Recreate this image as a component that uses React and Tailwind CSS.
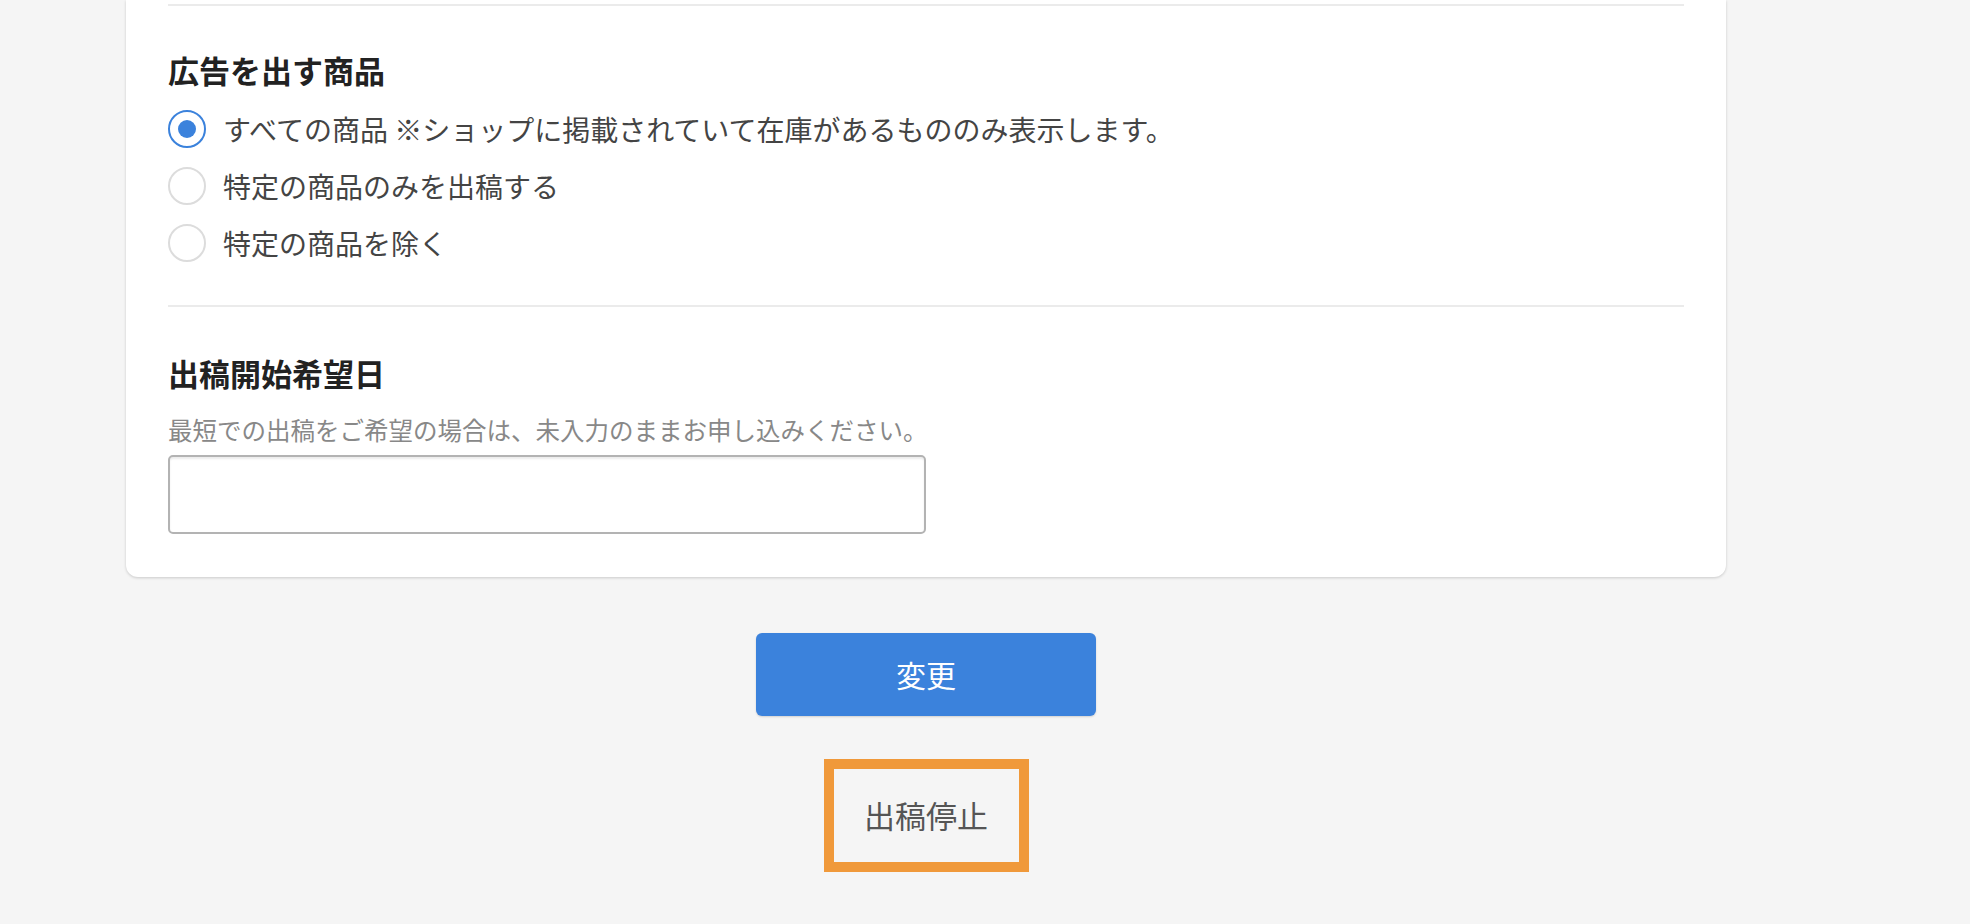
function Radio({ checked, label }) {
  return (
    <label className="flex h-[57px] items-center">
      <span
        className={
          checked
            ? "flex h-[38px] w-[38px] items-center justify-center rounded-full border-2 border-[#3b82dc] bg-white"
            : "h-[38px] w-[38px] rounded-full border-2 border-[#dcdcdc] bg-white"
        }
      >
        {checked && <span className="h-[18px] w-[18px] rounded-full bg-[#3b82dc]" />}
      </span>
      <span className="ml-[17px] text-[28px] leading-[40px] text-[#444]">{label}</span>
    </label>
  )
}

export default function App() {
  return (
    <div
      className="min-h-[924px] w-full bg-[#f5f5f5] pb-10"
      style={{ fontFamily: '"Noto Sans CJK JP", "Noto Sans", sans-serif' }}
    >
      {/* Card */}
      <div className="ml-[126px] w-[1600px] rounded-b-[12px] bg-white px-[42px] pt-[4px] pb-[43px] shadow-[0_1px_3px_rgba(0,0,0,0.18)]">
        <div className="h-[2px] bg-[#ebebeb]" />

        {/* 広告を出す商品 */}
        <h2 className="mt-[44px] text-[31px] font-bold leading-[40px] text-[#222]">広告を出す商品</h2>
        <div className="mt-[10px] flex flex-col">
          <Radio checked label="すべての商品 ※ショップに掲載されていて在庫があるもののみ表示します。" />
          <Radio label="特定の商品のみを出稿する" />
          <Radio label="特定の商品を除く" />
        </div>

        <div className="mt-[34px] h-[2px] bg-[#ebebeb]" />

        {/* 出稿開始希望日 */}
        <h2 className="mt-[46px] text-[31px] font-bold leading-[40px] text-[#222]">出稿開始希望日</h2>
        <p className="mt-[22px] text-[24.5px] leading-[30px] text-[#888]">
          最短での出稿をご希望の場合は、未入力のままお申し込みください。
        </p>
        <input
          type="text"
          className="mt-[10px] block h-[79px] w-[758px] rounded-[5px] border-2 border-[#b3b3b3] bg-white px-4 text-[26px] shadow-[inset_0_2px_2px_rgba(0,0,0,0.08)] outline-none"
        />
      </div>

      {/* Actions */}
      <div className="ml-[126px] flex w-[1600px] flex-col items-center">
        <button className="mt-[56px] h-[83px] w-[340px] rounded-[6px] bg-[#3b82dc] text-[30px] text-white shadow-[0_1px_2px_rgba(0,0,0,0.15)]">
          変更
        </button>
        <div className="mt-[43px] flex h-[113px] w-[205px] items-center justify-center border-[10px] border-[#f0993a]">
          <span className="text-[31px] text-[#555]">出稿停止</span>
        </div>
      </div>
    </div>
  )
}
